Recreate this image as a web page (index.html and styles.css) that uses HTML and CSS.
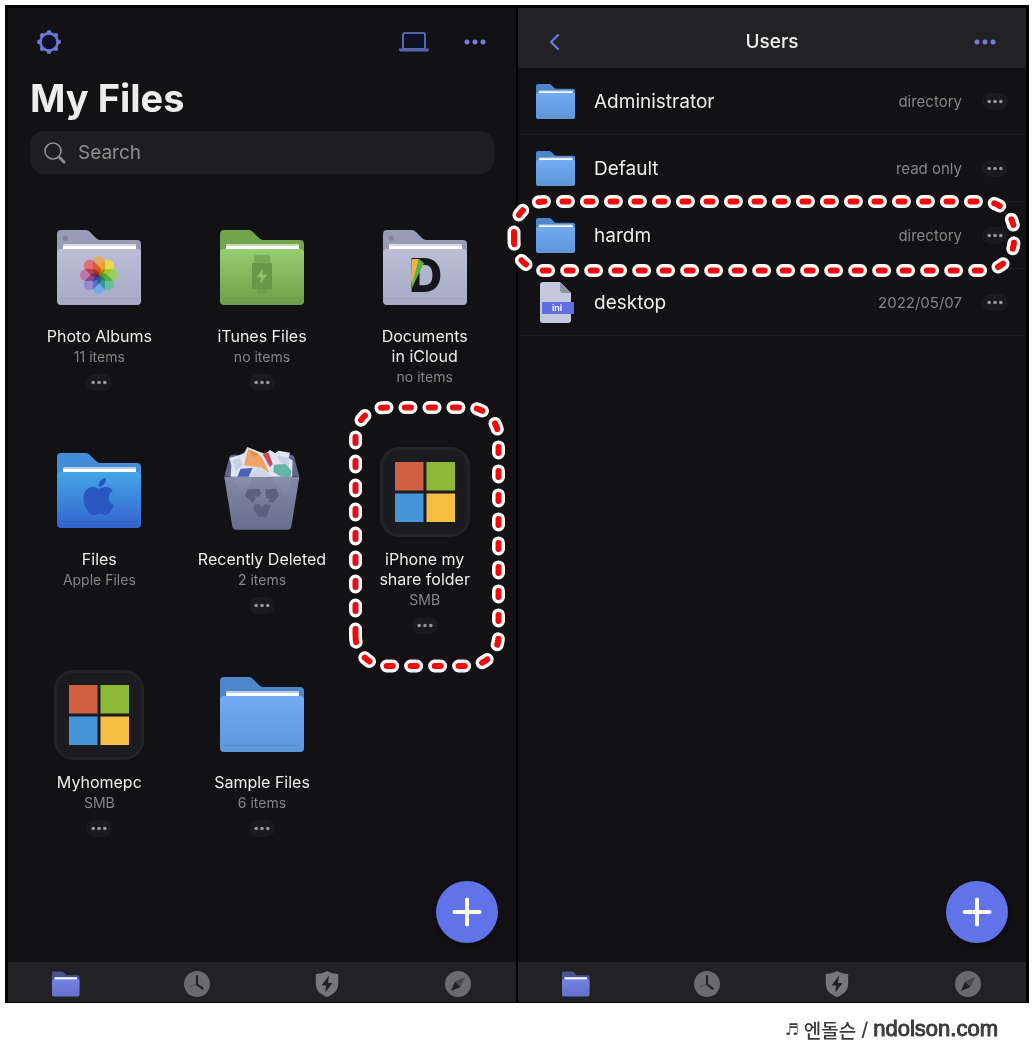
FILE: index.html
```html
<!DOCTYPE html>
<html lang="en">
<head>
    <meta charset="UTF-8">
    <meta name="viewport" content="width=device-width, initial-scale=1.0">
    <title>My Files</title>
    <link rel="stylesheet" href="styles.css">
</head>
<body>

    <!-- shared shapes -->
    <svg class="sprite" aria-hidden="true">
        <defs>
            <linearGradient id="gray" x1="0" y1="0" x2="0" y2="1">
                <stop offset="0" stop-color="#bbbed5"/>
                <stop offset="1" stop-color="#a6aac6"/>
            </linearGradient>
            <linearGradient id="green" x1="0" y1="0" x2="0" y2="1">
                <stop offset="0" stop-color="#96cd72"/>
                <stop offset="1" stop-color="#6b9f4a"/>
            </linearGradient>
            <linearGradient id="blue" x1="0" y1="0" x2="0" y2="1">
                <stop offset="0" stop-color="#72abf1"/>
                <stop offset="1" stop-color="#5f96d8"/>
            </linearGradient>
            <linearGradient id="deep" x1="0" y1="0" x2="0" y2="1">
                <stop offset="0" stop-color="#45a6e6"/>
                <stop offset="1" stop-color="#3463ce"/>
            </linearGradient>
            <linearGradient id="violet" x1="0" y1="0" x2="0" y2="1">
                <stop offset="0" stop-color="#7482e2"/>
                <stop offset="1" stop-color="#6370cc"/>
            </linearGradient>
            <linearGradient id="bin" x1="0" y1="0" x2="0" y2="1">
                <stop offset="0" stop-color="#8388a6"/>
                <stop offset="1" stop-color="#686e8e"/>
            </linearGradient>
            <path id="folder-back" d="M4 0H29Q31 0 33 2L39 8Q41 10 43 10H80Q84 10 84 14V40H0V4Q0 0 4 0Z"/>
            <g id="folder-paper" fill="#fff">
                <rect x="6" y="14" width="73" height="8" rx="1" opacity="0.6"/>
                <rect x="6" y="16" width="73" height="6"/>
            </g>
            <path id="folder-front" d="M4 19H80Q84 19 84 23V71Q84 75 80 75H4Q0 75 0 71V23Q0 19 4 19Z"/>
            <path id="folder-line" d="M3 68.500H81" stroke="#000" stroke-opacity="0.07"/>
            <path id="apple" d="M12.152 6.896c-.948 0-2.415-1.078-3.96-1.04-2.04.027-3.91 1.183-4.961 3.014-2.117 3.675-.546 9.103 1.519 12.09 1.013 1.454 2.208 3.09 3.792 3.039 1.52-.065 2.09-.987 3.935-.987 1.831 0 2.35.987 3.96.948 1.637-.026 2.676-1.48 3.676-2.948 1.156-1.688 1.636-3.325 1.662-3.415-.039-.013-3.182-1.221-3.22-4.857-.026-3.04 2.48-4.494 2.597-4.559-1.429-2.09-3.623-2.324-4.39-2.376-2-.156-3.675 1.09-4.61 1.09zM15.53 3.83c.843-1.012 1.4-2.427 1.245-3.83-1.207.052-2.662.805-3.532 1.818-.78.896-1.454 2.338-1.273 3.714 1.338.104 2.715-.688 3.559-1.701"/>
            <rect id="petal" x="-6" y="-19" width="12" height="19" rx="6"/>
        </defs>
        <symbol id="folder-gray" viewBox="0 0 84 75">
            <use href="#folder-back" fill="#989cb7"/>
            <use href="#folder-paper"/>
            <use href="#folder-front" fill="url(#gray)"/>
            <use href="#folder-line"/>
            <use href="#apple" transform="translate(5 4) scale(0.28)" fill="#7f839e"/>
        </symbol>
        <symbol id="folder-green" viewBox="0 0 84 75">
            <use href="#folder-back" fill="#70a44d"/>
            <use href="#folder-paper"/>
            <use href="#folder-front" fill="url(#green)"/>
            <use href="#folder-line"/>
        </symbol>
        <symbol id="folder-blue" viewBox="0 0 84 75">
            <use href="#folder-back" fill="#4e86ca"/>
            <use href="#folder-paper"/>
            <use href="#folder-front" fill="url(#blue)"/>
            <use href="#folder-line"/>
        </symbol>
        <symbol id="folder-deep" viewBox="0 0 84 75">
            <use href="#folder-back" fill="#458cd6"/>
            <use href="#folder-paper"/>
            <use href="#folder-front" fill="url(#deep)"/>
            <use href="#folder-line"/>
        </symbol>
        <symbol id="windows" viewBox="0 0 90 90">
            <rect x="1.5" y="1.5" width="87" height="87" rx="18" fill="#1b1b20" stroke="#222227" stroke-width="3"/>
            <path fill="#d06142" d="M15 15h28.500v28.500H15z"/>
            <path fill="#8cba38" d="M46.5 15H75v28.500H46.500z"/>
            <path fill="#4596d8" d="M15 46.500h28.500V75H15z"/>
            <path fill="#f6be43" d="M46.5 46.500H75V75H46.500z"/>
        </symbol>
        <symbol id="dots" viewBox="0 0 22 6">
            <circle cx="3" cy="3" r="2.5"/>
            <circle cx="11" cy="3" r="2.5"/>
            <circle cx="19" cy="3" r="2.5"/>
        </symbol>
        <symbol id="plus" viewBox="0 0 30 30">
            <path d="M15 2.5v25M2.5 15h25" stroke="#fff" stroke-width="4" stroke-linecap="round"/>
        </symbol>
        <symbol id="tab-folder" viewBox="0 0 29 26">
            <path fill="#4c5193" d="M1.500 0H10Q11.500 0 12.500 1.200L15 4H27Q28.500 4 28.500 5.500V15H0V1.500Q0 0 1.500 0Z"/>
            <path fill="#fff" d="M2.500 6h23.500v3h-23.500z"/>
            <path fill="url(#violet)" d="M1.500 8H27Q28.500 8 28.500 9.500V24.500Q28.500 26 27 26H1.500Q0 26 0 24.500V9.500Q0 8 1.500 8Z"/>
        </symbol>
        <symbol id="tab-clock" viewBox="0 0 28 26">
            <circle cx="14" cy="13" r="13" fill="#6b6b6d"/>
            <path d="M14 13L6.500 16" stroke="#4d4d4f" stroke-width="1"/>
            <path d="M14 5v8.500l5.500 4" fill="none" stroke="#222224" stroke-width="2.200" stroke-linecap="round"/>
        </symbol>
        <symbol id="tab-shield" viewBox="0 0 28 26">
            <path fill="#777779" d="M14 0C10.500 2 6.500 3 2.800 3V13C2.800 20 8.500 24 14 26 19.500 24 25.200 20 25.200 13V3C21.500 3 17.500 2 14 0Z"/>
            <path fill="#222224" d="M16 4.500L8.500 14.500H13L12.300 21.500 19.500 12H15Z"/>
        </symbol>
        <symbol id="tab-compass" viewBox="0 0 28 26">
            <circle cx="14" cy="13" r="13" fill="#6b6b6d"/>
            <path fill="#222224" d="M11 10.500L7 20 16.500 16Z"/>
            <path fill="#48484a" d="M11 10.500L21 6 16.500 16Z"/>
        </symbol>
    </svg>

    <main class="screens">
        <section class="screen">
            <header class="topbar">
                <button class="icon-button" aria-label="Settings">
                    <svg width="24" height="24" viewBox="0 0 24 24">
                        <circle cx="12" cy="12" r="8.600" fill="#0e1024" stroke="#6b78d8" stroke-width="2.600"/>
                        <g fill="#6b78d8">
                            <circle cx="12" cy="2.300" r="2.300"/><circle cx="12" cy="21.700" r="2.300"/>
                            <circle cx="2.300" cy="12" r="2.300"/><circle cx="21.700" cy="12" r="2.300"/>
                            <circle cx="5.200" cy="5.200" r="2.300"/><circle cx="18.800" cy="5.200" r="2.300"/>
                            <circle cx="5.200" cy="18.800" r="2.300"/><circle cx="18.800" cy="18.800" r="2.300"/>
                        </g>
                    </svg>
                </button>
                <div class="topbar-actions">
                    <button class="icon-button" aria-label="Computer">
                        <svg width="30" height="20" viewBox="0 0 30 20">
                            <rect x="4" y="1" width="22" height="16" rx="1.500" fill="#0e1024" stroke="#6b78d8" stroke-width="1.600"/>
                            <path fill="#5c62b4" d="M0 16.500h30v1q0 2-3 2H3q-3 0-3-2z"/>
                        </svg>
                    </button>
                    <button class="icon-button" aria-label="More">
                        <svg class="dots-top"><use href="#dots"/></svg>
                    </button>
                </div>
            </header>

            <h1>My Files</h1>

            <label class="search">
                <svg width="22" height="22" viewBox="0 0 22 22" fill="none" stroke="#8e8e90">
                    <circle cx="9" cy="9" r="8" stroke-width="1.600"/>
                    <path d="M15 15l1 1" stroke-width="1.600"/>
                    <path d="M16 16l4 4" stroke-width="3" stroke-linecap="round"/>
                </svg>
                <input type="text" placeholder="Search" aria-label="Search">
            </label>

            <ul class="grid">
                <li class="tile">
                    <svg class="tile-icon" viewBox="0 0 90 90">
                        <use href="#folder-gray" x="3" y="6" width="84" height="75"/>
                        <g class="flower" transform="translate(45 51)">
                            <use href="#petal" fill="#eda24c"/>
                            <use href="#petal" fill="#f5e52c" transform="rotate(45)"/>
                            <use href="#petal" fill="#97d64c" transform="rotate(90)"/>
                            <use href="#petal" fill="#58c48e" transform="rotate(135)"/>
                            <use href="#petal" fill="#62a8f0" transform="rotate(180)"/>
                            <use href="#petal" fill="#8c80d0" transform="rotate(225)"/>
                            <use href="#petal" fill="#c2649c" transform="rotate(270)"/>
                            <use href="#petal" fill="#e65c58" transform="rotate(315)"/>
                        </g>
                    </svg>
                    <span class="name">Photo Albums</span>
                    <span class="info">11 items</span>
                    <button class="more" aria-label="More"><svg><use href="#dots"/></svg></button>
                </li>
                <li class="tile">
                    <svg class="tile-icon" viewBox="0 0 90 90">
                        <use href="#folder-green" x="3" y="6" width="84" height="75"/>
                        <rect x="37" y="31" width="16" height="10" rx="2" fill="#76ab56"/>
                        <rect x="40" y="64" width="10" height="6" fill="#6da04e"/>
                        <rect x="35" y="39" width="20" height="26" rx="1" fill="#659947"/>
                        <path fill="#8cc269" d="M45.500 45L39.500 53.500H44L43 59.500 50.500 50.500H46Z"/>
                    </svg>
                    <span class="name">iTunes Files</span>
                    <span class="info">no items</span>
                    <button class="more" aria-label="More"><svg><use href="#dots"/></svg></button>
                </li>
                <li class="tile">
                    <svg class="tile-icon" viewBox="0 0 90 90">
                        <use href="#folder-gray" x="3" y="6" width="84" height="75"/>
                        <text class="logo-letter" x="29" y="68">D</text>
                        <path fill="#efb04e" d="M32 35H39L33 61Q31 59 31 54Z"/>
                        <path fill="#56b53c" d="M39 35L44 39 32 64V59Z"/>
                    </svg>
                    <span class="name">Documents<br>in iCloud</span>
                    <span class="info">no items</span>
                </li>
                <li class="tile">
                    <svg class="tile-icon" viewBox="0 0 90 90">
                        <use href="#folder-deep" x="3" y="6" width="84" height="75"/>
                        <use href="#apple" transform="translate(26 31) scale(1.550)" fill="#2957bd"/>
                    </svg>
                    <span class="name">Files</span>
                    <span class="info">Apple Files</span>
                </li>
                <li class="tile">
                    <svg class="tile-icon" viewBox="81 51 270 270">
                        <path fill="#60668a" d="M118 82Q120 74 130 74H300Q310 74 313 82L328 140H103Z"/>
                        <path fill="#dfe5f0" d="M122 140L124 106 118 84 148 76 163 68 172 51 210 66 226 72 240 60 256 70 266 62 300 68 296 84 308 92 306 140Z"/>
                        <path fill="#c6d0e0" d="M127 90L150 84 158 104 138 124ZM258 76L296 84 298 112 272 96Z"/>
                        <path fill="#f0a365" d="M174 58L206 72 218 86 238 128 212 112 162 106Z"/>
                        <path fill="#de9052" d="M174 58L206 72 190 82Z"/>
                        <path fill="#c84a5c" d="M218 72L236 68 248 102 240 112Z"/>
                        <path fill="#4a62b8" d="M152 116L188 114 176 140H142Z"/>
                        <path fill="#64b5a6" d="M252 104L286 102 304 122 302 142H276L250 126Z"/>
                        <path fill="#cfd6e4" d="M178 140L204 110 222 118 244 140Z"/>
                        <path fill="url(#bin)" d="M103 141H328L304 290Q302 299 292 299H139Q129 299 127 290Z"/>
                        <path fill="#fff" fill-opacity="0.05" d="M125 142H190L160 190ZM240 142H310L290 200Z"/>
                        <path fill="#5b607f" d="M174 178L208 176 215 190 206 200 194 198 198 208 186 218 165 196Z"/>
                        <path fill="#5b607f" d="M226 178L258 176 267 196 250 218 234 216 240 206 228 204Z"/>
                        <path fill="#5b607f" d="M192 224L206 222 216 230 226 222 242 226 230 260 206 260 190 236Z"/>
                    </svg>
                    <span class="name">Recently Deleted</span>
                    <span class="info">2 items</span>
                    <button class="more" aria-label="More"><svg><use href="#dots"/></svg></button>
                </li>
                <li class="tile">
                    <svg class="tile-icon"><use href="#windows"/></svg>
                    <span class="name">iPhone my<br>share folder</span>
                    <span class="info">SMB</span>
                    <button class="more" aria-label="More"><svg><use href="#dots"/></svg></button>
                    <svg class="marker marker-tile" viewBox="0 0 156 272">
                        <path class="halo" d="M6.500 234V36.500A30 30 0 0 1 36.500 6.500H119.500A30 30 0 0 1 149.500 36.500V235A30 30 0 0 1 119.500 265H36.500A30 30 0 0 1 6.500 235Z"/>
                        <path class="dash" d="M6.500 234V36.500A30 30 0 0 1 36.500 6.500H119.500A30 30 0 0 1 149.500 36.500V235A30 30 0 0 1 119.500 265H36.500A30 30 0 0 1 6.500 235Z"/>
                    </svg>
                </li>
                <li class="tile">
                    <svg class="tile-icon"><use href="#windows"/></svg>
                    <span class="name">Myhomepc</span>
                    <span class="info">SMB</span>
                    <button class="more" aria-label="More"><svg><use href="#dots"/></svg></button>
                </li>
                <li class="tile">
                    <svg class="tile-icon" viewBox="0 0 90 90">
                        <use href="#folder-blue" x="3" y="7" width="84" height="75"/>
                    </svg>
                    <span class="name">Sample Files</span>
                    <span class="info">6 items</span>
                    <button class="more" aria-label="More"><svg><use href="#dots"/></svg></button>
                </li>
            </ul>

            <button class="add" aria-label="Add"><svg width="30" height="30"><use href="#plus"/></svg></button>

            <nav class="tabs">
                <a href="#" aria-label="Files"><svg><use href="#tab-folder"/></svg></a>
                <a href="#" aria-label="Recents"><svg><use href="#tab-clock"/></svg></a>
                <a href="#" aria-label="Protection"><svg><use href="#tab-shield"/></svg></a>
                <a href="#" aria-label="Browser"><svg><use href="#tab-compass"/></svg></a>
            </nav>
        </section>

        <section class="screen">
            <header class="topbar navbar">
                <button class="icon-button" aria-label="Back">
                    <svg width="24" height="18" viewBox="0 0 24 18">
                        <path d="M11 2L4 9l7 7" fill="none" stroke="#6b78d8" stroke-width="2.400" stroke-linecap="round" stroke-linejoin="round"/>
                    </svg>
                </button>
                <h2>Users</h2>
                <button class="icon-button" aria-label="More">
                    <svg class="dots-top"><use href="#dots"/></svg>
                </button>
            </header>

            <ul class="list">
                <li class="row">
                    <svg class="row-icon"><use href="#folder-blue"/></svg>
                    <span class="row-name">Administrator</span>
                    <span class="row-info">directory</span>
                    <button class="more" aria-label="More"><svg><use href="#dots"/></svg></button>
                </li>
                <li class="row">
                    <svg class="row-icon"><use href="#folder-blue"/></svg>
                    <span class="row-name">Default</span>
                    <span class="row-info">read only</span>
                    <button class="more" aria-label="More"><svg><use href="#dots"/></svg></button>
                </li>
                <li class="row">
                    <svg class="row-icon"><use href="#folder-blue"/></svg>
                    <span class="row-name">hardm</span>
                    <span class="row-info">directory</span>
                    <button class="more" aria-label="More"><svg><use href="#dots"/></svg></button>
                    <svg class="marker marker-row" viewBox="0 0 515 82">
                        <path class="halo" d="M7 43V36.500A30 30 0 0 1 37 6.500H477A30 30 0 0 1 507 36.500V45.500A30 30 0 0 1 477 75.500H37A30 30 0 0 1 7 45.500Z"/>
                        <path class="dash" d="M7 43V36.500A30 30 0 0 1 37 6.500H477A30 30 0 0 1 507 36.500V45.500A30 30 0 0 1 477 75.500H37A30 30 0 0 1 7 45.500Z"/>
                    </svg>
                </li>
                <li class="row">
                    <svg class="row-icon row-file" viewBox="0 0 39 41">
                        <path fill="#c6c8de" d="M7 0H24L35 11V38Q35 41 32 41H7Q4 41 4 38V3Q4 0 7 0Z"/>
                        <path fill="#8f91a6" d="M24 0L35 11H27Q24 11 24 8Z"/>
                        <path fill="#5f6ee2" d="M6 20H38V32H6Z"/>
                        <text class="file-type" x="21" y="29">ini</text>
                    </svg>
                    <span class="row-name">desktop</span>
                    <span class="row-info">2022/05/07</span>
                    <button class="more" aria-label="More"><svg><use href="#dots"/></svg></button>
                </li>
            </ul>

            <button class="add" aria-label="Add"><svg width="30" height="30"><use href="#plus"/></svg></button>

            <nav class="tabs">
                <a href="#" aria-label="Files"><svg><use href="#tab-folder"/></svg></a>
                <a href="#" aria-label="Recents"><svg><use href="#tab-clock"/></svg></a>
                <a href="#" aria-label="Protection"><svg><use href="#tab-shield"/></svg></a>
                <a href="#" aria-label="Browser"><svg><use href="#tab-compass"/></svg></a>
            </nav>
        </section>
    </main>

    <footer class="credit">
        <span class="note">♬</span>
        <span class="author">엔돌슨</span>
        <span class="author">/</span>
        <span class="site">ndolson.com</span>
    </footer>

</body>
</html>
```
FILE: styles.css
```css
* {
    box-sizing: border-box;
}
body {
    font-family: Inter, "Noto Sans CJK KR", sans-serif;
    background: #fff;
    color: #ededee;
    margin: 0;
    padding: 5px 5px 0;
    min-height: 100vh;
    display: flex;
    flex-direction: column;
}
h1, h2, ul {
    margin: 0;
    padding: 0;
}
ul {
    list-style: none;
}
button {
    border: none;
    padding: 0;
    background: none;
    cursor: pointer;
}
svg {
    display: block;
}
.sprite {
    position: absolute;
    width: 0;
    height: 0;
}
.screens {
    flex: 1;
    display: grid;
    grid-template-columns: 1fr 1fr;
    gap: 2px;
    background: #000;
    border: 3px solid #000;
    border-bottom-width: 1px;
}
.screen {
    position: relative;
    display: flex;
    flex-direction: column;
    background: #121214;
}
.topbar {
    display: flex;
    align-items: center;
    justify-content: space-between;
    height: 60px;
    padding: 8px 29px 0;
}
.navbar {
    background: #222224;
}
.topbar-actions {
    display: flex;
    align-items: center;
    gap: 34px;
}
.icon-button {
    flex: none;
}
.dots-top {
    width: 24px;
    height: 6px;
    fill: #707dda;
}
h1 {
    font-size: 38px;
    line-height: 48px;
    font-weight: 700;
    padding: 6px 22px 0;
}
h2 {
    font-size: 19px;
    line-height: 24px;
    font-weight: 500;
}
.search {
    display: flex;
    align-items: center;
    gap: 12px;
    height: 43px;
    margin: 9px 22px 0;
    padding: 0 14px;
    border-radius: 14px;
    background: #1e1e20;
}
.search input {
    flex: 1;
    min-width: 0;
    border: none;
    outline: none;
    padding: 0;
    background: none;
    color: #ededee;
    font: 19px/24px Inter, sans-serif;
}
.search input::placeholder {
    color: #8e8e90;
}
.grid {
    display: grid;
    grid-template-columns: repeat(3, 1fr);
    grid-auto-rows: minmax(223px, auto);
    padding: 50px 10px 0;
}
.tile {
    position: relative;
    display: flex;
    flex-direction: column;
    align-items: center;
    text-align: center;
}
.tile-icon {
    width: 90px;
    height: 90px;
    margin-bottom: 12px;
}
.flower {
    isolation: isolate;
}
.flower use {
    mix-blend-mode: multiply;
    opacity: 0.8;
}
.logo-letter {
    font-size: 46px;
    font-weight: 800;
    fill: #15161b;
}
.name {
    font-size: 16px;
    line-height: 20px;
}
.info {
    font-size: 14px;
    line-height: 22px;
    color: #858587;
}
.more {
    display: flex;
    align-items: center;
    justify-content: center;
    flex: none;
    width: 26px;
    height: 17px;
    border-radius: 9px;
    background: #1a1a1c;
}
.tile .more {
    margin-top: 6px;
}
.more svg {
    width: 16px;
    height: 5px;
    fill: #979799;
}
.marker {
    position: absolute;
    fill: none;
    stroke-linecap: round;
    pointer-events: none;
    z-index: 1;
}
.marker-tile {
    width: 156px;
    top: -46px;
    left: calc(50% - 76px);
}
.marker-row {
    width: calc(100% + 7px);
    top: -7px;
    left: -11px;
}
.halo {
    stroke: #fff;
    stroke-width: 13;
    stroke-dasharray: 6 18;
}
.dash {
    stroke: #f00a0a;
    stroke-width: 6;
    stroke-dasharray: 6 18;
}
.row {
    position: relative;
    display: flex;
    align-items: center;
    height: 67px;
    padding: 0 18px;
    border-bottom: 1px solid #1c1c1e;
}
.row-icon {
    width: 39px;
    height: 35px;
    margin-right: 19px;
}
.row-file {
    height: 41px;
}
.file-type {
    font-size: 9px;
    font-weight: 600;
    text-anchor: middle;
    fill: #fff;
}
.row-name {
    flex: 1;
    font-size: 19px;
}
.row-info {
    font-size: 15px;
    color: #858587;
    margin-right: 20px;
}
.add {
    position: absolute;
    right: 18px;
    bottom: 59px;
    display: flex;
    align-items: center;
    justify-content: center;
    width: 62px;
    height: 62px;
    border-radius: 50%;
    background: #6073e8;
    box-shadow: 0 2px 10px rgba(0, 0, 0, 0.4);
}
.tabs {
    display: flex;
    justify-content: space-between;
    margin-top: auto;
    padding: 9px 44px 5px;
    background: #222224;
}
.tabs svg {
    width: 28px;
    height: 26px;
}
.credit {
    display: flex;
    align-items: center;
    justify-content: flex-end;
    gap: 5px;
    height: 52px;
    padding-right: 31px;
    color: #3c3c3c;
}
.note {
    font-family: "DejaVu Sans", sans-serif;
    font-size: 16px;
}
.author {
    font-size: 19px;
    font-weight: 500;
}
.site {
    font-family: "Liberation Sans", Arial, sans-serif;
    font-size: 22px;
    -webkit-text-stroke: 1px #3c3c3c;
}
```
